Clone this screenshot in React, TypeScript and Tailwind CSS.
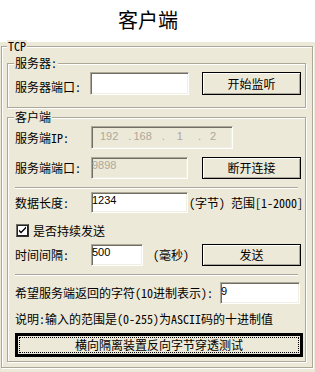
import React from "react";

const CJK = "font-['Noto_Sans_Mono_CJK_SC','Noto_Sans_CJK_SC',sans-serif]";
const EDITFONT = "font-['Liberation_Sans',sans-serif] text-[11px] leading-[13px]";

function Group({
  legend,
  legendPos,
  className,
  children,
}: {
  legend: string;
  legendPos: string;
  className: string;
  children?: React.ReactNode;
}) {
  return (
    <div
      className={`relative border border-[#ACA899] shadow-[inset_1px_1px_0_#fff,1px_1px_0_#fff] ${className}`}
    >
      <span
        className={`absolute top-[-7px] ${legendPos} bg-[#ECE9D8] px-[1px] leading-[12px] whitespace-nowrap`}
      >
        {legend}
      </span>
      {children}
    </div>
  );
}

function Edit({
  className,
  disabled,
  children,
}: {
  className: string;
  disabled?: boolean;
  children?: React.ReactNode;
}) {
  return (
    <div
      className={`shrink-0 border border-t-[#ACA899] border-l-[#ACA899] border-r-white border-b-white shadow-[inset_1px_1px_0_#716F64,inset_-1px_-1px_0_#F1EFE2] ${
        disabled ? "bg-[#ECE9D8] text-[#ACA899]" : "bg-white text-black"
      } ${EDITFONT} ${className}`}
    >
      {children}
    </div>
  );
}

function Btn({ className, children }: { className: string; children: React.ReactNode }) {
  return (
    <div
      className={`shrink-0 flex items-center justify-center border border-black bg-[#ECE9D8] shadow-[inset_1px_1px_0_#fff,inset_-1px_-1px_0_#ACA899] leading-[14px] ${className}`}
    >
      {children}
    </div>
  );
}

function Sep() {
  return <div className="ml-[7px] w-[283px] h-0 border-t border-t-[#ACA899] border-b border-b-white" />;
}

export default function App() {
  return (
    <div className={`w-[315px] h-[372px] bg-[#ECE9D8] text-black text-[12px] ${CJK}`}>
      <div className="h-[42px] bg-white pl-[118px] pt-[8px] text-[20px] leading-[24px]">客户端</div>
      <div className="pl-[1px] pt-[4px]">
        <Group legend="TCP" legendPos="left-[5px]" className="w-[312px] h-[322px]">
          <Group legend="服务器:" legendPos="left-[6px]" className="ml-[5px] mt-[16px] w-[299px] h-[45px]">
            <div className="flex items-start ml-[7px] mt-[8px]">
              <span className="w-[75px] leading-[14px] pt-[8px]">服务器端口:</span>
              <Edit className="w-[99px] h-[23px]" />
              <Btn className="ml-[13px] w-[99px] h-[23px]">开始监听</Btn>
            </div>
          </Group>
          <Group legend="客户端" legendPos="left-[6px]" className="ml-[5px] mt-[9px] w-[299px] h-[245px]">
            <div className="flex items-center ml-[7px] mt-[8px]">
              <span className="w-[76px] leading-[14px]">服务端IP:</span>
              <Edit disabled className="w-[142px] h-[23px] flex items-start pt-[3px]">
                <span className="ml-[8px]">192</span>
                <span className="ml-[10px]">.</span>
                <span className="ml-[2px]">168</span>
                <span className="ml-[10px]">.</span>
                <span className="ml-[12px]">1</span>
                <span className="ml-[15px]">.</span>
                <span className="ml-[9px]">2</span>
              </Edit>
            </div>
            <div className="flex items-center ml-[7px] mt-[8px]">
              <span className="w-[76px] leading-[14px]">服务端端口:</span>
              <Edit disabled className="w-[97px] h-[22px] pt-[1px]">
                9898
              </Edit>
              <Btn className="ml-[14px] w-[99px] h-[22px]">断开连接</Btn>
            </div>
            <div className="mt-[8px]">
              <Sep />
            </div>
            <div className="flex items-center ml-[7px] mt-[3px]">
              <span className="w-[76px] leading-[14px]">数据长度:</span>
              <Edit className="w-[97px] h-[21px] pt-[1px]">1234</Edit>
              <span className="ml-[1px] leading-[14px] whitespace-nowrap">(字节) 范围[1-2000]</span>
            </div>
            <div className="flex items-center ml-[8px] mt-[11px] h-[13px]">
              <div className="w-[13px] h-[13px] border border-t-[#716F64] border-l-[#716F64] border-r-[#333] border-b-[#333] shadow-[inset_1px_1px_0_#222,inset_-1px_-1px_0_#222] bg-white flex items-center justify-center">
                <svg width="9" height="9" viewBox="0 0 9 9">
                  <path d="M1 3.5 L1 5.5 L3 7.5 L8 2.5 L8 0.5 L3 5.5 Z" fill="#000" />
                </svg>
              </div>
              <span className="ml-[4px] leading-[14px]">是否持续发送</span>
            </div>
            <div className="flex items-center ml-[7px] mt-[7px]">
              <span className="w-[76px] leading-[14px]">时间间隔:</span>
              <Edit className="w-[52px] h-[22px] pt-[1px]">500</Edit>
              <span className="ml-[10px] w-[49px] leading-[14px]">(毫秒)</span>
              <Btn className="w-[99px] h-[22px]">发送</Btn>
            </div>
            <div className="mt-[8px]">
              <Sep />
            </div>
            <div className="flex items-center ml-[7px] mt-[6px]">
              <span className="w-[205px] leading-[14px] whitespace-nowrap">希望服务端返回的字符(10进制表示):</span>
              <Edit className="w-[80px] h-[22px] pt-[2px]">9</Edit>
            </div>
            <div className="ml-[7px] mt-[8px] h-[14px] leading-[14px] whitespace-nowrap">
              说明:输入的范围是(0-255)为ASCII码的十进制值
            </div>
            <div className="ml-[7px] mt-[7px] w-[288px] h-[24px] border-[3px] border-black bg-[#ECE9D8] p-[1px]">
              <div className="h-full border border-dotted border-black flex items-center justify-center leading-[14px]">
                横向隔离装置反向字节穿透测试
              </div>
            </div>
          </Group>
        </Group>
      </div>
    </div>
  );
}
